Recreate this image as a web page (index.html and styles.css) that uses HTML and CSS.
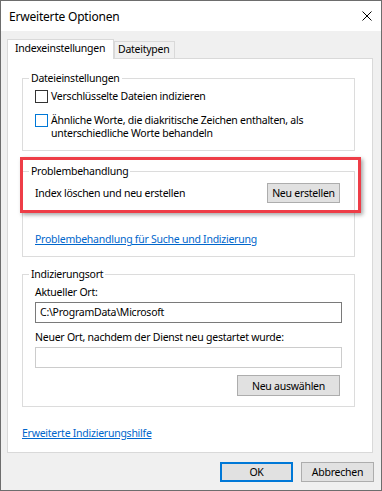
FILE: index.html
```html
<!DOCTYPE html>
<html lang="de">
  <head>
    <meta charset="UTF-8" />
    <title>Erweiterte Optionen</title>
    <link rel="stylesheet" href="styles.css">
  </head>
  <body>
    <div class="window">
      <div class="titlebar">
        <span class="title">Erweiterte Optionen</span>
        <svg class="close" width="10" height="10" viewBox="0 0 10 10">
          <path d="M0.5 0.5L9.5 9.5M9.5 0.5L0.5 9.5" stroke="#000" stroke-width="1" fill="none" />
        </svg>
      </div>
      <div class="client">
        <div class="tabs">
          <div class="tab active">Indexeinstellungen</div>
          <div class="tab">Dateitypen</div>
        </div>
        <div class="panel">
          <fieldset class="group files">
            <legend>Dateieinstellungen</legend>
            <label class="check">
              <span class="box"></span>
              <span>Verschlüsselte Dateien indizieren</span>
            </label>
            <label class="check second">
              <span class="box focus"></span>
              <span>Ähnliche Worte, die diakritische Zeichen enthalten, als<br>unterschiedliche Worte behandeln</span>
            </label>
          </fieldset>

          <fieldset class="group trouble">
            <legend>Problembehandlung</legend>
            <div class="row">
              <span>Index löschen und neu erstellen</span>
              <button class="btn rebuild">Neu erstellen</button>
            </div>
            <a class="link" href="#">Problembehandlung für Suche und Indizierung</a>
          </fieldset>

          <!-- annotation drawn over the screenshot -->
          <div class="highlight"></div>

          <fieldset class="group location">
            <legend>Indizierungsort</legend>
            <div class="label">Aktueller Ort:</div>
            <div class="field">C:\ProgramData\Microsoft</div>
            <div class="label next">Neuer Ort, nachdem der Dienst neu gestartet wurde:</div>
            <div class="field disabled"></div>
            <div class="actions">
              <button class="btn choose">Neu auswählen</button>
            </div>
          </fieldset>

          <a class="link help" href="#">Erweiterte Indizierungshilfe</a>
        </div>
        <div class="footer">
          <button class="btn dialog default">OK</button>
          <button class="btn dialog">Abbrechen</button>
        </div>
      </div>
    </div>
  </body>
</html>
```

FILE: styles.css
```css
* {
  box-sizing: border-box;
}
body {
  margin: 0;
  font-family: "Noto Sans", sans-serif;
  font-size: 10.5px;
  letter-spacing: -0.25px;
  color: #000;
}
.window {
  width: 382px;
  height: 491px;
  border: 1px solid #6d6d6d;
  background: #f0f0f0;
  display: flex;
  flex-direction: column;
}
.titlebar {
  height: 30px;
  background: #fff;
  display: flex;
  align-items: center;
  justify-content: space-between;
  padding: 0 9px 0 8px;
  font-size: 12px;
  letter-spacing: -0.2px;
}
.client {
  flex: 1;
  padding: 8px 8px 0 6px;
  display: flex;
  flex-direction: column;
}
.tabs {
  height: 19px;
  display: flex;
  align-items: flex-end;
}
.tab {
  height: 17px;
  width: 61px;
  border: 1px solid #d9d9d9;
  border-bottom: none;
  padding: 0 3px;
  line-height: 15px;
  white-space: nowrap;
}
.tab.active {
  height: 20px;
  width: 107px;
  margin-bottom: -1px;
  padding: 0 7px;
  line-height: 17px;
  background: #fff;
  position: relative;
  z-index: 1;
}
.panel {
  height: 395px;
  background: #fff;
  border: 1px solid #d9d9d9;
  padding: 11px 17px 0 14px;
  position: relative;
  display: flex;
  flex-direction: column;
  align-items: flex-start;
}
.group {
  width: 333px;
  margin: 0;
  border: 1px solid #dcdcdc;
  padding: 4px 12px 12px 12px;
  min-width: 0;
}
.group legend {
  padding: 0 2px;
  margin-left: -6px;
  line-height: 16px;
}
.files {
  padding-bottom: 10px;
}
.check {
  display: flex;
  gap: 3px;
  line-height: 13px;
}
.check.second {
  margin-top: 11px;
}
.box {
  width: 13px;
  height: 13px;
  flex: none;
  border: 1px solid #333;
  background: #fff;
}
.box.focus {
  border-color: #0078d7;
}
.trouble {
  margin-top: 12px;
  padding-bottom: 10px;
}
.row {
  display: flex;
  align-items: center;
  justify-content: space-between;
}
.btn {
  font: inherit;
  letter-spacing: inherit;
  color: #000;
  background: #e1e1e1;
  border: 1px solid #adadad;
  padding: 0;
  height: 20px;
  line-height: 16px;
}
.rebuild {
  width: 73px;
  margin-right: 2px;
}
.link {
  display: block;
  color: #0066cc;
  text-decoration: underline;
  line-height: 13px;
}
.trouble .link {
  margin-top: 30px;
}
.highlight {
  position: absolute;
  left: 12px;
  top: 98px;
  width: 341px;
  height: 56px;
  border: 3px solid #ee3d47;
  box-shadow: 2px 2px 4px rgba(0, 0, 0, 0.35);
}
.location {
  margin-top: 9px;
  padding-bottom: 10px;
}
.label {
  line-height: 13px;
}
.label.next {
  margin-top: 8px;
}
.field {
  height: 21px;
  margin-top: 3px;
  border: 1px solid #7a7a7a;
  background: #fff;
  padding: 0 4px;
  line-height: 19px;
}
.field.disabled {
  border-color: #cccccc;
}
.actions {
  display: flex;
  justify-content: flex-end;
  margin-top: 7px;
}
.choose {
  width: 103px;
  height: 21px;
  margin-right: 2px;
}
.help {
  margin-top: 20px;
}
.footer {
  display: flex;
  justify-content: flex-end;
  gap: 8px;
  margin-top: 9px;
  margin-right: -1px;
}
.dialog {
  width: 73px;
}
.default {
  border: 2px solid #0078d7;
}
```
